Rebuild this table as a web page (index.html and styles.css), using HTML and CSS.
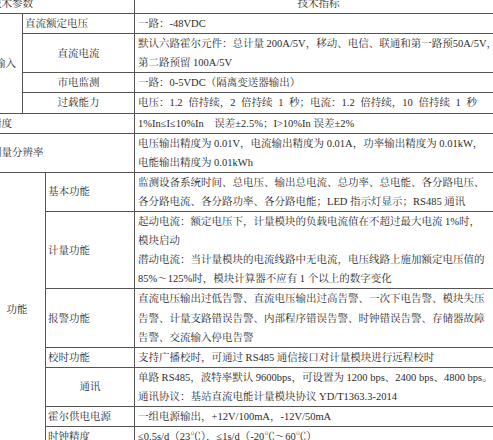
FILE: index.html
```html
<!DOCTYPE html>
<html lang="zh-CN">
<head>
<meta charset="utf-8">
<title>技术参数</title>
<link rel="stylesheet" href="styles.css">
</head>
<body>
<table class="sheet">
  <colgroup>
    <col class="c-group">
    <col class="c-sub">
    <col class="c-label">
    <col class="c-value">
  </colgroup>
  <tr class="head">
    <td colspan="3" class="left">技术参数</td>
    <td class="center">技术指标</td>
  </tr>
  <tr>
    <td rowspan="4" class="center">输入</td>
    <td colspan="2" class="left">直流额定电压</td>
    <td>一路：-48VDC</td>
  </tr>
  <tr>
    <td colspan="2" class="center">直流电流</td>
    <td>默认六路霍尔元件：总计量 200A/5V，移动、电信、联通和第一路预50A/5V，<br>第二路预留 100A/5V</td>
  </tr>
  <tr>
    <td colspan="2" class="center">市电监测</td>
    <td>一路：0-5VDC（隔离变送器输出）</td>
  </tr>
  <tr>
    <td colspan="2" class="center">过载能力</td>
    <td class="wide">电压：1.2 倍持续，2 倍持续 1 秒；电流：1.2 倍持续，10 倍持续 1 秒</td>
  </tr>
  <tr>
    <td colspan="3" class="left">精度</td>
    <td>1%In≤I≤10%In　误差±2.5%；I&gt;10%In 误差±2%</td>
  </tr>
  <tr>
    <td colspan="3" class="left">测量分辨率</td>
    <td>电压输出精度为 0.01V，电流输出精度为 0.01A，功率输出精度为 0.01kW，<br>电能输出精度为 0.01kWh</td>
  </tr>
  <tr>
    <td colspan="2" rowspan="7" class="center">功能</td>
    <td class="left">基本功能</td>
    <td>监测设备系统时间、总电压、输出总电流、总功率、总电能、各分路电压、<br>各分路电流、各分路功率、各分路电能；LED 指示灯显示；RS485 通讯</td>
  </tr>
  <tr>
    <td class="left">计量功能</td>
    <td>起动电流：额定电压下，计量模块的负载电流值在不超过最大电流 1%时，<br>模块启动<br>潜动电流：当计量模块的电流线路中无电流，电压线路上施加额定电压值的<br>85%～125%时，模块计算器不应有 1 个以上的数字变化</td>
  </tr>
  <tr>
    <td class="left">报警功能</td>
    <td>直流电压输出过低告警、直流电压输出过高告警、一次下电告警、模块失压<br>告警、计量支路错误告警、内部程序错误告警、时钟错误告警、存储器故障<br>告警、交流输入停电告警</td>
  </tr>
  <tr>
    <td class="left">校时功能</td>
    <td>支持广播校时，可通过 RS485 通信接口对计量模块进行远程校时</td>
  </tr>
  <tr>
    <td class="center">通讯</td>
    <td>单路 RS485，波特率默认 9600bps，可设置为 1200 bps、2400 bps、4800 bps。<br>通讯协议：基站直流电能计量模块协议 YD/T1363.3-2014</td>
  </tr>
  <tr>
    <td class="left">霍尔供电电源</td>
    <td>一组电源输出，+12V/100mA，-12V/50mA</td>
  </tr>
  <tr>
    <td class="left">时钟精度</td>
    <td>≤0.5s/d（23℃），≤1s/d（-20℃～60℃）</td>
  </tr>
</table>
</body>
</html>
```
FILE: styles.css
```css
html, body {
  margin: 0;
  padding: 0;
  background: #ffffff;
  overflow: hidden;
}

.sheet {
  margin: -7px 0 0 -12px;
  width: 514px;
  table-layout: fixed;
  border-collapse: collapse;
  font-family: "Liberation Serif", "Noto Serif CJK SC", "Noto Sans CJK SC", serif;
  font-size: 10.5px;
  line-height: 19.1px;
  color: #2b2b2b;
}

.c-group { width: 34px; }
.c-sub { width: 23px; }
.c-label { width: 89px; }
.c-value { width: 368px; }

.sheet td {
  border: 1px solid #555555;
  padding: 0 3px;
  white-space: nowrap;
  vertical-align: middle;
  text-align: left;
  overflow: hidden;
}

.sheet td.center { text-align: center; }
.sheet td.left { text-align: left; padding-left: 2px; }
.sheet td.wide { word-spacing: 3px; }

.sheet .head td { height: 19px; }
```
